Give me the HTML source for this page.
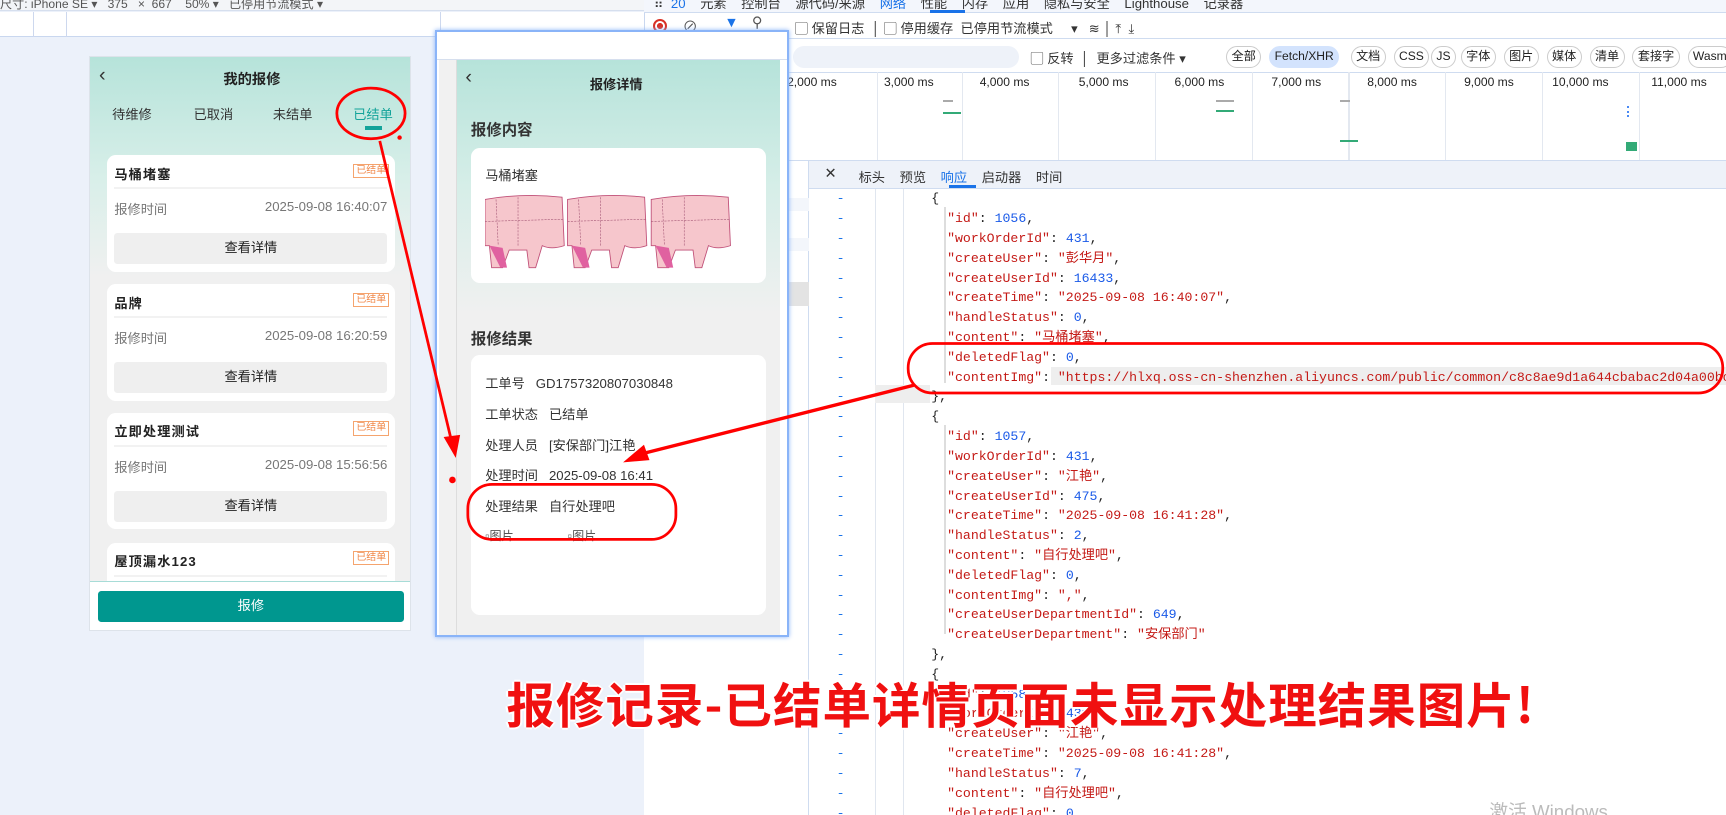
<!DOCTYPE html>
<html><head><meta charset="utf-8">
<style>
*{margin:0;padding:0;box-sizing:border-box}
html,body{width:1726px;height:814px;overflow:hidden;background:linear-gradient(90deg,#ecf1fa 0,#ecf1fa 644px,#fff 644px)}
#w{position:absolute;left:0;top:0;width:1568px;height:740px;zoom:1.1008;overflow:hidden;font-family:"Liberation Sans","Noto Sans CJK SC",sans-serif;color:#222}
.a{position:absolute}
.t{position:absolute;white-space:nowrap}
.card{position:absolute;background:#fff;border-radius:8px}
.tag{position:absolute;border:1px solid #f5a46e;color:#f0884a;font-size:9px;padding:0 2px;line-height:11px}
.btn{position:absolute;background:#efefef;border-radius:3px;font-size:12px;text-align:center;line-height:28px;color:#222}
.mono{font-family:"Liberation Mono","Noto Sans CJK SC",monospace;font-size:12px}
.s{color:#c41a16}.n{color:#1a5ae8}
.fb{position:absolute;top:42px;height:20px;border:1px solid #ccc;border-radius:10px;font-size:11px;line-height:18px;padding:0 4px;background:#fff}
</style></head><body><div id="w">
<div class="a" style="left:0;top:0;width:585px;height:740px;background:#ecf1fa"></div>
<div class="a" style="left:0;top:0;width:585px;height:10px;background:#f3f5f8;border-bottom:1px solid #d6dfee"></div>
<div class="t" style="left:0;top:-5px;font-size:11px;color:#555">尺寸: iPhone SE ▾ &nbsp; 375 &nbsp; × &nbsp;667 &nbsp;&nbsp; 50% ▾ &nbsp; 已停用节流模式 ▾</div>
<div class="a" style="left:0;top:11px;width:585px;height:23px;background:#fff;border-bottom:1px solid #c9d7ef"></div>
<div class="a" style="left:30px;top:11px;width:1px;height:23px;background:#cdd8ee"></div>
<div class="a" style="left:60px;top:11px;width:1px;height:23px;background:#cdd8ee"></div>
<div class="a" style="left:400px;top:11px;width:1px;height:23px;background:#cdd8ee"></div>
<div class="a" style="left:81px;top:51px;width:292px;height:522px;background:#f0f0f0;border:1px solid #dde3ea;overflow:hidden">
 <div class="a" style="left:0;top:0;width:292px;height:200px;background:linear-gradient(#b6e3da,#d8efe9 55%,#f0f0f0)"></div>
 <div class="t" style="left:8px;top:6px;font-size:18px;color:#333">‹</div>
 <div class="t" style="left:121px;top:10px;font-size:13px;font-weight:bold">我的报修</div>
 <div class="t" style="left:20px;top:43px;font-size:12px;color:#333">待维修</div>
 <div class="t" style="left:94px;top:43px;font-size:12px;color:#333">已取消</div>
 <div class="t" style="left:166px;top:43px;font-size:12px;color:#333">未结单</div>
 <div class="t" style="left:239px;top:43px;font-size:12px;color:#13a39a">已结单</div>
 <div class="a" style="left:250px;top:63px;width:15px;height:3px;background:#13a39a"></div>
 <div class="card" style="left:15px;top:89px;width:262px;height:106px">
  <div class="t" style="left:7px;top:8px;font-size:12px;font-weight:bold;letter-spacing:1px">马桶堵塞</div>
  <div class="tag" style="left:224px;top:8px">已结单</div>
  <div class="a" style="left:7px;top:29px;width:248px;height:2px;background:#f2f2f2"></div>
  <div class="t" style="left:7px;top:40px;font-size:12px;color:#777">报修时间</div>
  <div class="t" style="right:7px;top:40px;font-size:12px;color:#777">2025-09-08 16:40:07</div>
  <div class="btn" style="left:7px;top:71px;width:248px">查看详情</div>
 </div>
 <div class="card" style="left:15px;top:206px;width:262px;height:106px">
  <div class="t" style="left:7px;top:8px;font-size:12px;font-weight:bold;letter-spacing:1px">品牌</div>
  <div class="tag" style="left:224px;top:8px">已结单</div>
  <div class="a" style="left:7px;top:29px;width:248px;height:2px;background:#f2f2f2"></div>
  <div class="t" style="left:7px;top:40px;font-size:12px;color:#777">报修时间</div>
  <div class="t" style="right:7px;top:40px;font-size:12px;color:#777">2025-09-08 16:20:59</div>
  <div class="btn" style="left:7px;top:71px;width:248px">查看详情</div>
 </div>
 <div class="card" style="left:15px;top:323px;width:262px;height:106px">
  <div class="t" style="left:7px;top:8px;font-size:12px;font-weight:bold;letter-spacing:1px">立即处理测试</div>
  <div class="tag" style="left:224px;top:8px">已结单</div>
  <div class="a" style="left:7px;top:29px;width:248px;height:2px;background:#f2f2f2"></div>
  <div class="t" style="left:7px;top:40px;font-size:12px;color:#777">报修时间</div>
  <div class="t" style="right:7px;top:40px;font-size:12px;color:#777">2025-09-08 15:56:56</div>
  <div class="btn" style="left:7px;top:71px;width:248px">查看详情</div>
 </div>
 <div class="card" style="left:15px;top:441px;width:262px;height:106px">
  <div class="t" style="left:7px;top:8px;font-size:12px;font-weight:bold;letter-spacing:1px">屋顶漏水123</div>
  <div class="tag" style="left:224px;top:8px">已结单</div>
  <div class="a" style="left:7px;top:29px;width:248px;height:2px;background:#f2f2f2"></div>
 </div>
 <div class="a" style="left:0;top:476px;width:292px;height:46px;background:#fff;border-top:1px solid #a7dcd7"></div>
 <div class="a" style="left:7px;top:485px;width:278px;height:28px;background:#00978f;border-radius:3px;color:#fff;font-size:12px;text-align:center;line-height:28px">报修</div>
</div>
<div class="a" style="left:585px;top:0;width:983px;height:740px;background:#fff;border-left:1px solid #c9d7ef"></div>
<div class="a" style="left:585px;top:0;width:983px;height:12px;background:#f3f6fc;border-bottom:1px solid #cfdcf0"></div>
<div class="t" style="left:594px;top:-6px;font-size:12px;color:#333">⠿ &nbsp;<span style="color:#1a73e8">20</span> &nbsp;&nbsp; 元素 &nbsp;&nbsp; 控制台 &nbsp;&nbsp; 源代码/来源 &nbsp;&nbsp; <span style="color:#1a73e8">网络</span> &nbsp;&nbsp; 性能 &nbsp;&nbsp; 内存 &nbsp;&nbsp; 应用 &nbsp;&nbsp; 隐私与安全 &nbsp;&nbsp; Lighthouse &nbsp;&nbsp; 记录器</div>
<div class="a" style="left:845px;top:9px;width:32px;height:3px;background:#1a73e8"></div>
<div class="a" style="left:585px;top:12px;width:983px;height:23px;border-bottom:1px solid #cfdcf0"></div>
<div class="a" style="left:593px;top:17px;width:13px;height:13px;border-radius:50%;border:2px solid #d93025;background:radial-gradient(#d93025 40%,#fff 45%)"></div>
<div class="t" style="left:620px;top:14px;font-size:14px;color:#555">⊘</div>
<div class="t" style="left:658px;top:14px;font-size:13px;color:#1a73e8">▼</div>
<div class="t" style="left:683px;top:14px;font-size:13px;color:#555">⚲</div>
<div class="t" style="left:722px;top:16px;font-size:12px;color:#333">▢ 保留日志 &nbsp;│ ▢ 停用缓存 &nbsp;已停用节流模式 &nbsp;&nbsp;&nbsp; ▾ &nbsp; ≋ │ ⤒ &nbsp;⤓</div>
<div class="a" style="left:720px;top:42px;width:206px;height:20px;background:#eef2f9;border-radius:10px"></div>
<div class="t" style="left:936px;top:44px;font-size:12px;color:#333">▢ 反转 &nbsp;│ &nbsp;更多过滤条件 ▾</div>
<div class="fb" style="left:1114px">全部</div>
<div class="fb" style="left:1153px;background:#d3e3fd;border-color:#d3e3fd">Fetch/XHR</div>
<div class="fb" style="left:1227px">文档</div>
<div class="fb" style="left:1266px">CSS</div>
<div class="fb" style="left:1300px">JS</div>
<div class="fb" style="left:1327px">字体</div>
<div class="fb" style="left:1366px">图片</div>
<div class="fb" style="left:1405px">媒体</div>
<div class="fb" style="left:1444px">清单</div>
<div class="fb" style="left:1483px">套接字</div>
<div class="fb" style="left:1533px">Wasm</div>
<div class="a" style="left:585px;top:65px;width:983px;height:1px;background:#cfdcf0"></div>
<div class="t" style="left:715px;top:68px;font-size:11px">2,000 ms</div>
<div class="t" style="left:803px;top:68px;font-size:11px">3,000 ms</div><div class="t" style="left:890px;top:68px;font-size:11px">4,000 ms</div>
<div class="t" style="left:980px;top:68px;font-size:11px">5,000 ms</div><div class="t" style="left:1067px;top:68px;font-size:11px">6,000 ms</div>
<div class="t" style="left:1155px;top:68px;font-size:11px">7,000 ms</div><div class="t" style="left:1242px;top:68px;font-size:11px">8,000 ms</div>
<div class="t" style="left:1330px;top:68px;font-size:11px">9,000 ms</div><div class="t" style="left:1410px;top:68px;font-size:11px">10,000 ms</div>
<div class="t" style="left:1500px;top:68px;font-size:11px">11,000 ms</div>
<div class="a" style="left:797px;top:65px;width:1px;height:80px;background:#e3e8f0"></div><div class="a" style="left:874px;top:65px;width:1px;height:80px;background:#e3e8f0"></div>
<div class="a" style="left:961px;top:65px;width:1px;height:80px;background:#e3e8f0"></div><div class="a" style="left:1049px;top:65px;width:1px;height:80px;background:#e3e8f0"></div>
<div class="a" style="left:1137px;top:65px;width:1px;height:80px;background:#e3e8f0"></div><div class="a" style="left:1225px;top:65px;width:1px;height:80px;background:#e3e8f0"></div>
<div class="a" style="left:1313px;top:65px;width:1px;height:80px;background:#e3e8f0"></div><div class="a" style="left:1401px;top:65px;width:1px;height:80px;background:#e3e8f0"></div>
<div class="a" style="left:1489px;top:65px;width:1px;height:80px;background:#e3e8f0"></div>
<div class="a" style="left:857px;top:91px;width:9px;height:2px;background:#aaa"></div><div class="a" style="left:857px;top:102px;width:16px;height:2px;background:#3a7"></div>
<div class="a" style="left:1105px;top:91px;width:16px;height:2px;background:#aaa"></div><div class="a" style="left:1105px;top:100px;width:16px;height:2px;background:#3a7"></div>
<div class="a" style="left:1217px;top:91px;width:9px;height:2px;background:#aaa"></div><div class="a" style="left:1217px;top:127px;width:17px;height:2px;background:#3a7"></div>
<div class="a" style="left:1478px;top:96px;width:24px;height:10px;border-left:2px dotted #4a8af4"></div>
<div class="a" style="left:1477px;top:129px;width:10px;height:8px;background:#3a7"></div>
<div class="a" style="left:585px;top:145px;width:983px;height:1px;background:#cfdcf0"></div>
<div class="a" style="left:585px;top:146px;width:150px;height:594px;background:#fff;border-right:1px solid #cfdcf0"></div>
<div class="a" style="left:585px;top:180px;width:150px;height:12px;background:#f3f6fb"></div>
<div class="a" style="left:585px;top:216px;width:150px;height:12px;background:#f3f6fb"></div>
<div class="a" style="left:585px;top:256px;width:150px;height:22px;background:#e3e3e3"></div>
<div class="a" style="left:735px;top:146px;width:833px;height:26px;background:#eef2f9;border-bottom:1px solid #cfdcf0"></div>
<div class="t" style="left:749px;top:151px;font-size:13px;color:#333">✕</div>
<div class="t" style="left:780px;top:152px;font-size:12px;color:#333">标头 &nbsp;&nbsp;&nbsp;预览 &nbsp;&nbsp;&nbsp;<span style="color:#1a73e8">响应</span> &nbsp;&nbsp;&nbsp;启动器 &nbsp;&nbsp;&nbsp;时间</div>
<div class="a" style="left:862px;top:168px;width:25px;height:3px;background:#1a73e8"></div>
<div class="a" style="left:736px;top:172px;width:832px;height:568px;overflow:hidden">
 <div class="a" style="left:59px;top:0;width:1px;height:568px;background:#e0e6ef"></div>
 <div class="a" style="left:84px;top:0;width:1px;height:568px;background:#e0e6ef"></div>
 <div class="a" style="left:122px;top:16px;width:1px;height:160px;background:#ddd"></div>
 <div class="a" style="left:122px;top:214px;width:1px;height:190px;background:#ddd"></div>
 <div class="a" style="left:59px;top:178px;width:50px;height:16px;background:#eee"></div>
 <div class="a" style="left:219px;top:161px;width:613px;height:17px;background:#eee"></div>
 <div class="a mono" style="left:24px;top:0;line-height:18px;white-space:pre;color:#1a73e8">-
-
-
-
-
-
-
-
-
-
-
-
-
-
-
-
-
-
-
-
-
-
-
-
-
-
-
-
-
-
-
-
-</div>
 <div class="a mono" style="left:110px;top:0;line-height:18px;white-space:pre;color:#222">{
  <span class="s">"id"</span>: <span class="n">1056</span>,
  <span class="s">"workOrderId"</span>: <span class="n">431</span>,
  <span class="s">"createUser"</span>: <span class="s">"彭华月"</span>,
  <span class="s">"createUserId"</span>: <span class="n">16433</span>,
  <span class="s">"createTime"</span>: <span class="s">"2025-09-08 16:40:07"</span>,
  <span class="s">"handleStatus"</span>: <span class="n">0</span>,
  <span class="s">"content"</span>: <span class="s">"马桶堵塞"</span>,
  <span class="s">"deletedFlag"</span>: <span class="n">0</span>,
  <span class="s">"contentImg"</span>: <span class="s">"https://hlxq.oss-cn-shenzhen.aliyuncs.com/public/common/c8c8ae9d1a644cbabac2d04a00bccc11_20250908</span>
},
{
  <span class="s">"id"</span>: <span class="n">1057</span>,
  <span class="s">"workOrderId"</span>: <span class="n">431</span>,
  <span class="s">"createUser"</span>: <span class="s">"江艳"</span>,
  <span class="s">"createUserId"</span>: <span class="n">475</span>,
  <span class="s">"createTime"</span>: <span class="s">"2025-09-08 16:41:28"</span>,
  <span class="s">"handleStatus"</span>: <span class="n">2</span>,
  <span class="s">"content"</span>: <span class="s">"自行处理吧"</span>,
  <span class="s">"deletedFlag"</span>: <span class="n">0</span>,
  <span class="s">"contentImg"</span>: <span class="s">","</span>,
  <span class="s">"createUserDepartmentId"</span>: <span class="n">649</span>,
  <span class="s">"createUserDepartment"</span>: <span class="s">"安保部门"</span>
},
{
  <span class="s">"id"</span>: <span class="n">1058</span>,
  <span class="s">"workOrderId"</span>: <span class="n">431</span>,
  <span class="s">"createUser"</span>: <span class="s">"江艳"</span>,
  <span class="s">"createTime"</span>: <span class="s">"2025-09-08 16:41:28"</span>,
  <span class="s">"handleStatus"</span>: <span class="n">7</span>,
  <span class="s">"content"</span>: <span class="s">"自行处理吧"</span>,
  <span class="s">"deletedFlag"</span>: <span class="n">0</span>,
  <span class="s">"contentImg"</span>: <span class="s">","</span></div>
</div>
<div class="a" style="left:395px;top:27px;width:322px;height:552px;background:#fff;border:2px solid #8ab4f8;box-shadow:0 0 4px #8ab4f8;overflow:hidden">
 <div class="a" style="left:0;top:0;width:318px;height:26px;border-bottom:1px solid #d6dfee"></div>
 <div class="a" style="left:2px;top:26px;width:16px;height:530px;background:#f1f1f1;border-right:1px solid #ddd"></div>
 <div class="a" style="left:18px;top:26px;width:294px;height:530px;background:#f0f0f0;overflow:hidden">
  <div class="a" style="left:0;top:0;width:294px;height:230px;background:linear-gradient(#b6e3da,#d6eee8 50%,#f0f0f0)"></div>
  <div class="t" style="left:8px;top:5px;font-size:18px;color:#333">‹</div>
  <div class="t" style="left:121px;top:12px;font-size:12px;font-weight:bold">报修详情</div>
  <div class="t" style="left:13px;top:52px;font-size:14px;font-weight:bold;color:#333">报修内容</div>
  <div class="card" style="left:13px;top:80px;width:268px;height:122px">
   <div class="t" style="left:13px;top:15px;font-size:12px;color:#333">马桶堵塞</div>
   <svg class="a" style="left:13px;top:42px" width="246" height="68" viewBox="0 0 246 68">
    <g id="cow"><path d="M0 4 Q35 -2 70 2 L72 46 Q60 50 52 46 L46 66 L40 66 L38 50 L22 50 L16 66 L6 66 L4 46 L0 46Z" fill="#f6c6cc" stroke="#c05078" stroke-width="0.8"/><path d="M4 46 L14 66 L20 66 L16 48Z" fill="#e061a0"/><path d="M10 4 L12 46 M30 2 L30 46 M0 24 L72 22" stroke="#a05070" stroke-width="0.5" stroke-dasharray="2 1" fill="none"/></g>
    <use href="#cow" x="75"/><use href="#cow" x="151"/>
   </svg>
  </div>
  <div class="t" style="left:13px;top:242px;font-size:14px;font-weight:bold;color:#333">报修结果</div>
  <div class="card" style="left:13px;top:268px;width:268px;height:236px">
   <div class="t" style="left:13px;top:16px;font-size:12px;color:#333">工单号 &nbsp;&nbsp;GD1757320807030848</div>
   <div class="t" style="left:13px;top:44px;font-size:12px;color:#333">工单状态 &nbsp;&nbsp;已结单</div>
   <div class="t" style="left:13px;top:72px;font-size:12px;color:#333">处理人员 &nbsp;&nbsp;[安保部门]江艳</div>
   <div class="t" style="left:13px;top:100px;font-size:12px;color:#333">处理时间 &nbsp;&nbsp;2025-09-08 16:41</div>
   <div class="t" style="left:13px;top:128px;font-size:12px;color:#333">处理结果 &nbsp;&nbsp;自行处理吧</div>
   <div class="t" style="left:13px;top:156px;font-size:11px;color:#555">▫图片</div>
   <div class="t" style="left:88px;top:156px;font-size:11px;color:#555">▫图片</div>
  </div>
  <div class="t" style="left:13px;top:520px;font-size:14px;font-weight:bold;color:#333">报修进度</div>
 </div>
</div>
<svg class="a" style="left:0;top:0" width="1568" height="740">
 <ellipse cx="337" cy="103" rx="31" ry="23" fill="none" stroke="#f00" stroke-width="2.5"/>
 <circle cx="363" cy="125" r="2" fill="#f00"/>
 <rect x="825" y="312" width="740" height="45" rx="22" fill="none" stroke="#f00" stroke-width="2.5"/>
 <rect x="425" y="440" width="189" height="50" rx="22" fill="none" stroke="#f00" stroke-width="2.5"/>
 <circle cx="411" cy="436" r="3" fill="#f00"/>
 <line x1="345" y1="128" x2="410" y2="400" stroke="#f00" stroke-width="2.5"/>
 <polygon points="403,397 418,395 414,416" fill="#f00"/>
 <line x1="830" y1="350" x2="580" y2="413" stroke="#f00" stroke-width="3"/>
 <polygon points="566,420 585,404 590,418" fill="#f00"/>
</svg>
<div class="t" style="left:460px;top:606px;font-size:44px;font-weight:bold;color:#f01010;letter-spacing:1px;font-family:'Noto Sans CJK SC','Liberation Sans',sans-serif;text-shadow:2px 0 #fff,-2px 0 #fff,0 2px #fff,0 -2px #fff">报修记录-已结单详情页面未显示处理结果图片!</div>
<div class="t" style="left:1353px;top:724px;font-size:17px;color:#bbb">激活 Windows</div>
</div></body></html>
